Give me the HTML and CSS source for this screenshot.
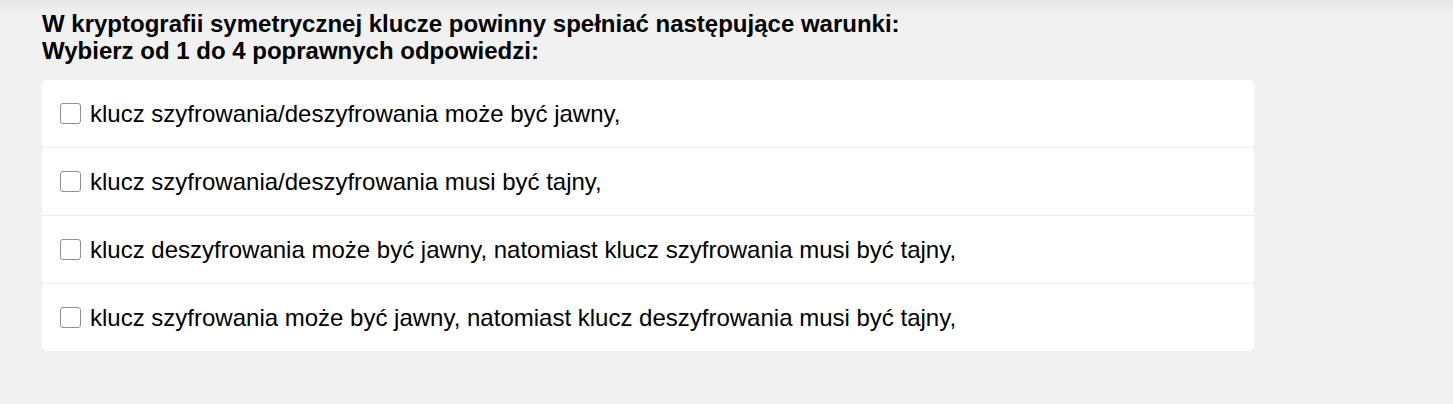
FILE: index.html
```html
<!DOCTYPE html>
<html lang="pl">
<head>
<meta charset="utf-8">
<link rel="stylesheet" href="styles.css">
</head>
<body>
<div class="page">
  <div class="question">
    <div class="q-title">W kryptografii symetrycznej klucze powinny spełniać następujące warunki:</div>
    <div class="q-hint">Wybierz od 1 do 4 poprawnych odpowiedzi:</div>
  </div>
  <div class="answers">
    <label class="answer"><input type="checkbox" class="box"><span class="answer-text">klucz szyfrowania/deszyfrowania może być jawny,</span></label>
    <label class="answer"><input type="checkbox" class="box"><span class="answer-text">klucz szyfrowania/deszyfrowania musi być tajny,</span></label>
    <label class="answer"><input type="checkbox" class="box"><span class="answer-text">klucz deszyfrowania może być jawny, natomiast klucz szyfrowania musi być tajny,</span></label>
    <label class="answer"><input type="checkbox" class="box"><span class="answer-text">klucz szyfrowania może być jawny, natomiast klucz deszyfrowania musi być tajny,</span></label>
  </div>
</div>
</body>
</html>
```

FILE: styles.css
```css
html, body {
  margin: 0;
  padding: 0;
  height: 100%;
}
body {
  background: linear-gradient(to bottom, #e8e8e8 0px, #f1f1f1 18px, #f1f1f1 100%);
  font-family: "Liberation Sans", Arial, sans-serif;
  color: #000;
}
.page {
  padding: 10px 0 0 42px;
  width: 1212px;
}
.question {
  font-weight: bold;
  font-size: 24px;
  line-height: 27px;
}
.answers {
  margin-top: 16px;
  background: #fff;
  border-radius: 5px;
  display: flex;
  flex-direction: column;
}
.answer {
  display: flex;
  align-items: center;
  padding-left: 18px;
  border-top: 1px solid #eeeeee;
  font-size: 24px;
  box-sizing: border-box;
}
.answer:first-child {
  border-top: none;
  height: 67px;
}
.answer:not(:first-child) {
  height: 68px;
}
.box {
  appearance: none;
  -webkit-appearance: none;
  margin: 0 9px 0 0;
  width: 21px;
  height: 21px;
  border: 1px solid #8f8f9d;
  border-radius: 3px;
  background: #fff;
  box-sizing: border-box;
  flex: none;
}
.answer-text {
  line-height: 28px;
}
```
